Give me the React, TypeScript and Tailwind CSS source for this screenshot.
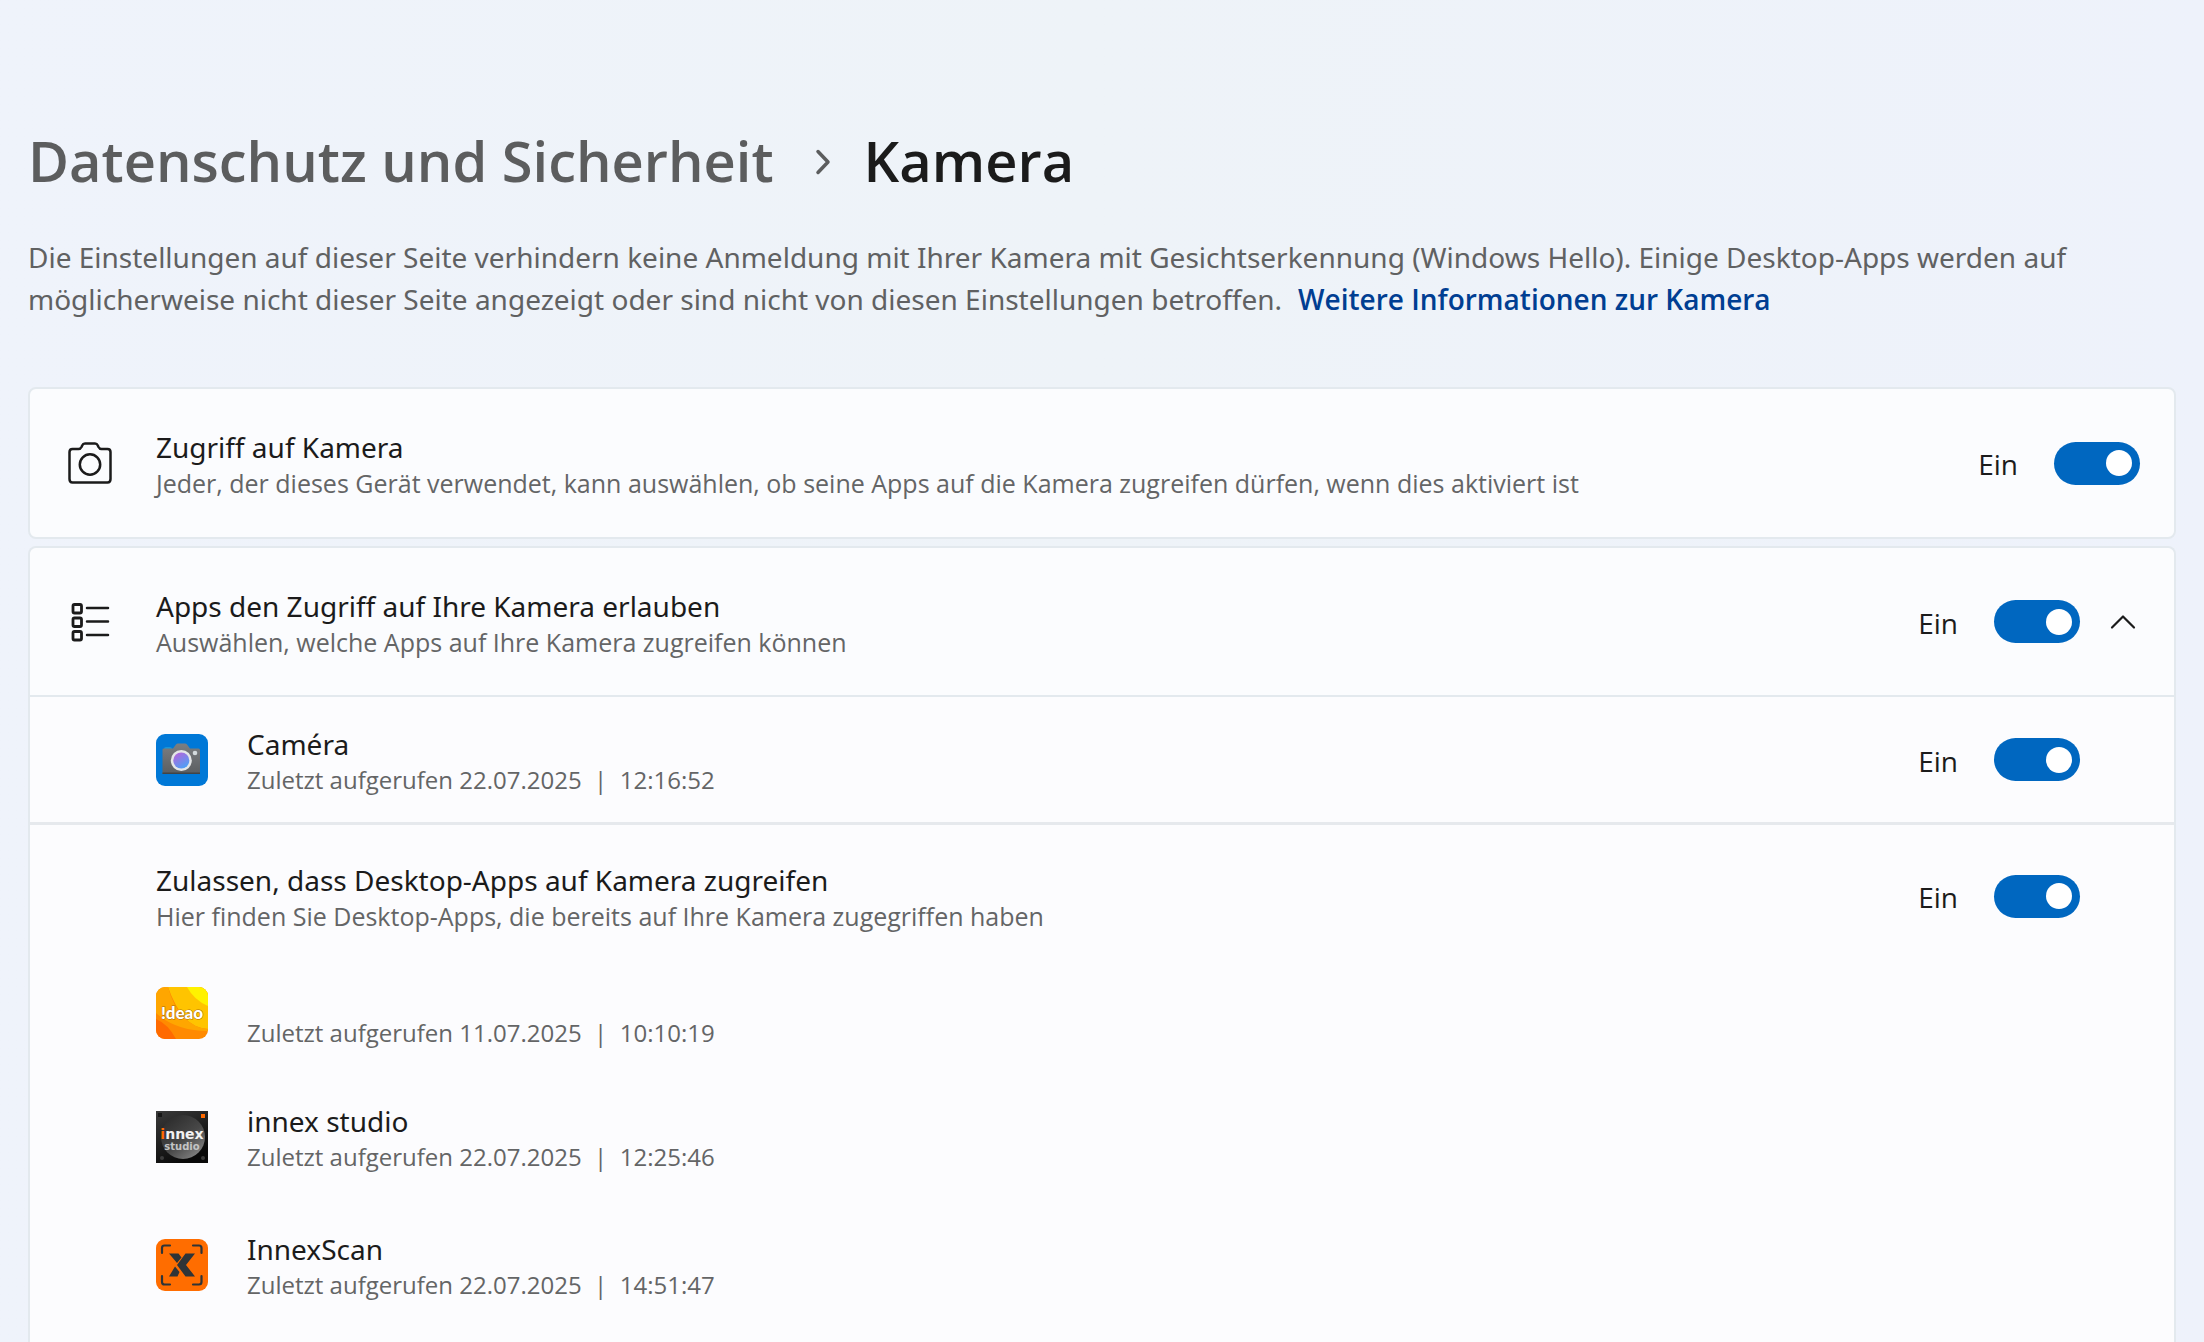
import React, { useState } from 'react';

interface AccessToggleProps {
  id: string;
  label: string;
}

function AccessToggle({ id, label }: AccessToggleProps) {
  const [enabled, setEnabled] = useState(true);

  return (
    <div className="flex flex-shrink-0 items-center gap-9">
      <label htmlFor={id} className="pt-0.5 text-[28px] leading-9 text-[#1b1b1b]">
        {enabled ? 'Ein' : 'Aus'}
      </label>
      <input
        id={id}
        type="checkbox"
        role="switch"
        aria-label={label}
        checked={enabled}
        onChange={(e) => setEnabled(e.target.checked)}
        className="flex h-[43px] w-[86px] cursor-pointer appearance-none items-center rounded-full bg-[#8a8a8a] px-2 before:block before:size-[26px] before:rounded-full before:bg-white checked:justify-end checked:bg-[#0067c0]"
      />
    </div>
  );
}

interface RowTextProps {
  title: string;
  detail: string;
}

function SettingText({ title, detail }: RowTextProps) {
  return (
    <div className="min-w-0 flex-1 pt-1">
      <p className="font-['Noto_Sans',sans-serif] text-[28px] leading-9 text-[#1b1b1b]">{title}</p>
      <p className="text-[25px] leading-9 text-[#646566]">{detail}</p>
    </div>
  );
}

function AppText({ title, detail }: RowTextProps) {
  return (
    <div className="min-w-0 flex-1 pt-1">
      <p className="min-h-9 font-['Noto_Sans',sans-serif] text-[28px] leading-9 text-[#1b1b1b]">{title}</p>
      <p className="whitespace-pre-wrap text-[24px] leading-9 text-[#646566]">{detail}</p>
    </div>
  );
}

function CameraOutline() {
  return (
    <svg viewBox="0 0 44 42" className="h-[42px] w-11" fill="none" stroke="#1b1b1b" strokeWidth="2.5" strokeLinejoin="round">
      <path d="M4.5 7H10.500Q12.500 7 13.500 5L14.200 3.400Q15 1.600 17 1.600H27Q29 1.600 29.800 3.400L30.500 5Q31.500 7 33.500 7H39.500Q42.500 7 42.500 10V37Q42.500 40.500 39.500 40.500H4.500Q1.500 40.500 1.500 37V10Q1.500 7 4.500 7Z" />
      <circle cx="22" cy="22.500" r="10.200" />
    </svg>
  );
}

function AppListOutline() {
  return (
    <svg viewBox="0 0 40 40" className="size-10" fill="none" stroke="#1b1b1b" strokeWidth="2.800" strokeLinecap="round">
      <rect x="3" y="2.500" width="8.500" height="8.500" rx="1.500" />
      <rect x="3" y="16" width="8.500" height="8.500" rx="1.500" />
      <rect x="3" y="29.500" width="8.500" height="8.500" rx="1.500" />
      <path d="M17 6H38M17 19.500H38M17 33H38" strokeWidth="2.500" />
    </svg>
  );
}

function CameraAppIcon() {
  return (
    <svg viewBox="0 0 52 52" className="size-[52px] flex-shrink-0">
      <defs>
        <linearGradient id="lens" x1="0.2" y1="0" x2="0.8" y2="1">
          <stop offset="0" stopColor="#b565dc" />
          <stop offset="1" stopColor="#46a4f8" />
        </linearGradient>
        <linearGradient id="body" x1="0" y1="0" x2="0" y2="1">
          <stop offset="0" stopColor="#7b7e81" />
          <stop offset="1" stopColor="#5b5e61" />
        </linearGradient>
      </defs>
      <rect width="52" height="52" rx="9" fill="#0078d7" />
      <rect x="8" y="13" width="8" height="4" rx="2" fill="#1695d8" />
      <path d="M6.500 15.500Q6.500 14.500 8 14.500H17L20 10.500Q20.700 9.500 22 9.500H29Q30.200 9.500 31 10.500L34 14.500H42.500Q44 14.500 44 16V40H6.500Z" fill="url(#body)" />
      <path d="M6.500 38.500H44V40H6.500Z" fill="#414446" />
      <circle cx="25.300" cy="26.500" r="10.500" fill="#e4e6e8" />
      <circle cx="25.300" cy="26.500" r="8" fill="url(#lens)" />
      <circle cx="39" cy="19" r="2.300" fill="#d3dadd" />
    </svg>
  );
}

function IdeaoIcon() {
  return (
    <svg viewBox="0 0 52 52" className="size-[52px] flex-shrink-0">
      <defs>
        <clipPath id="ideaoClip">
          <rect width="52" height="52" rx="9" />
        </clipPath>
      </defs>
      <g clipPath="url(#ideaoClip)">
        <rect width="52" height="52" fill="#ff8a00" />
        <path d="M12 0H52V42Q38 41 29 31Q19 20 12 0Z" fill="#ffc400" />
        <path d="M0 0H12Q17 20 29 31Q38 41 52 42V44Q20 44 0 26Z" fill="#ffa600" />
        <path d="M0 32Q12 37 20 52H0Z" fill="#ff6a00" />
        <path d="M31 0H52V19Q38 13 31 0Z" fill="#fff200" />
      </g>
      <text x="26" y="32" textAnchor="middle" fontFamily="Lato, sans-serif" fontWeight="900" fontSize="17" fill="#ffffff" stroke="#a86a10" strokeWidth="1" paintOrder="stroke">!deao</text>
    </svg>
  );
}

function InnexStudioIcon() {
  return (
    <svg viewBox="0 0 52 52" className="size-[52px] flex-shrink-0">
      <defs>
        <linearGradient id="dial" x1="0" y1="0" x2="0.8" y2="1">
          <stop offset="0" stopColor="#262626" />
          <stop offset="0.6" stopColor="#484848" />
          <stop offset="1" stopColor="#858585" />
        </linearGradient>
        <linearGradient id="plate" x1="0" y1="0" x2="0.5" y2="1">
          <stop offset="0" stopColor="#3a3a3a" />
          <stop offset="1" stopColor="#090909" />
        </linearGradient>
      </defs>
      <rect width="52" height="52" fill="url(#plate)" />
      <circle cx="27" cy="26" r="22" fill="url(#dial)" />
      <rect x="2" y="2" width="4" height="4" fill="#161616" />
      <rect x="45" y="3" width="4" height="4" fill="#ff6a00" />
      <circle cx="6" cy="47" r="2" fill="#3b3b3b" />
      <circle cx="47" cy="47" r="2" fill="#3b3b3b" />
      <text x="26" y="28" textAnchor="middle" fontFamily="'DejaVu Sans', sans-serif" fontWeight="700" fontSize="14" fill="#f2f2f2">
        <tspan fill="#ff6a00">i</tspan>nnex
      </text>
      <text x="26" y="39" textAnchor="middle" fontFamily="'DejaVu Sans', sans-serif" fontWeight="700" fontSize="10" fill="#c4c4c4">studio</text>
    </svg>
  );
}

function InnexScanIcon() {
  return (
    <svg viewBox="0 0 52 52" className="size-[52px] flex-shrink-0">
      <rect width="52" height="52" rx="9" fill="#ff6d00" />
      <path
        d="M6 14V9Q6 6.500 8.500 6.500H14M37 6.500H43Q45.500 6.500 45.500 9V14M45.500 37V43Q45.500 45.500 43 45.500H37M14 45.500H8.500Q6 45.500 6 43V37"
        fill="none"
        stroke="#2f3437"
        strokeWidth="2.200"
        strokeLinecap="round"
      />
      <path d="M13 14.500H22.500L25.500 18.500L21 24ZM29.500 14.500H39L30 26L39 37.500H29.500L21 26ZM19 27.500L23.500 33L21.500 37.500H13Z" fill="#2f3437" />
    </svg>
  );
}

const desktopApps = [
  { title: '', detail: 'Zuletzt aufgerufen 11.07.2025  |  10:10:19', icon: <IdeaoIcon />, height: 'h-[120px]' },
  { title: 'innex studio', detail: 'Zuletzt aufgerufen 22.07.2025  |  12:25:46', icon: <InnexStudioIcon />, height: 'h-32' },
  { title: 'InnexScan', detail: 'Zuletzt aufgerufen 22.07.2025  |  14:51:47', icon: <InnexScanIcon />, height: 'h-32' },
];

export default function App() {
  const [expanded, setExpanded] = useState(true);

  return (
    <main
      lang="de"
      className="flex min-h-screen flex-col bg-linear-to-r from-[#eff3fb] via-[#eef3f8] to-[#eef2fb] px-7 pt-[118px] font-['Open_Sans','Noto_Sans',sans-serif]"
    >
      <nav aria-label="Navigationspfad">
        <h1 className="flex items-center text-[56px] leading-[84px] font-semibold">
          <a href="#datenschutz" className="text-[#5c5d5e]">Datenschutz und Sicherheit</a>
          <svg viewBox="0 0 18 26" className="mr-8 ml-10 mt-1 h-[26px] w-[18px]" fill="none" stroke="#5c5d5e" strokeWidth="3.500" strokeLinecap="round" strokeLinejoin="round">
            <path d="M4 2.500L14 13L4 23.500" />
          </svg>
          <span className="text-[#1b1b1b]">Kamera</span>
        </h1>
      </nav>

      <p className="mt-[34px] max-w-[2100px] font-['Noto_Sans',sans-serif] text-[28px] leading-[42px] text-[#606162]">
        Die Einstellungen auf dieser Seite verhindern keine Anmeldung mit Ihrer Kamera mit Gesichtserkennung (Windows Hello). Einige Desktop-Apps werden auf möglicherweise nicht dieser Seite angezeigt oder sind nicht von diesen Einstellungen betroffen.
        <a href="#kamera-info" className="ml-4 font-['Open_Sans',sans-serif] font-semibold text-[#003e92]">Weitere Informationen zur Kamera</a>
      </p>

      <section className="mt-[67px] flex h-[152px] items-center rounded-lg border-2 border-[#e3e9ee] bg-[#fbfcfe] pr-[34px]">
        <div className="flex w-[126px] flex-shrink-0 pl-[38px]">
          <CameraOutline />
        </div>
        <SettingText
          title="Zugriff auf Kamera"
          detail="Jeder, der dieses Gerät verwendet, kann auswählen, ob seine Apps auf die Kamera zugreifen dürfen, wenn dies aktiviert ist"
        />
        <AccessToggle id="camera-access" label="Zugriff auf Kamera" />
      </section>

      <section className="mt-[7px] flex flex-1 flex-col rounded-t-lg border-2 border-b-0 border-[#e3e9ee] bg-[#fcfcfe]">
        <div className="flex h-[149px] items-center rounded-t-lg border-b-2 border-[#e3e9ee] bg-[#fbfcfe]">
          <div className="flex w-[126px] flex-shrink-0 pl-10">
            <AppListOutline />
          </div>
          <SettingText title="Apps den Zugriff auf Ihre Kamera erlauben" detail="Auswählen, welche Apps auf Ihre Kamera zugreifen können" />
          <AccessToggle id="apps-access" label="Apps den Zugriff auf Ihre Kamera erlauben" />
          <button
            type="button"
            aria-label="Apps ein- oder ausblenden"
            aria-expanded={expanded}
            onClick={() => setExpanded(!expanded)}
            className="flex h-12 w-[94px] flex-shrink-0 cursor-pointer items-center pl-[30px]"
          >
            <svg viewBox="0 0 26 16" className="h-4 w-[26px]" fill="none" stroke="#1b1b1b" strokeWidth="2.200" strokeLinecap="round" strokeLinejoin="round">
              <path d="M2 13.500L13 2.500L24 13.500" />
            </svg>
          </button>
        </div>

        {expanded && (
          <>
            <div className="flex h-32 items-center border-b-3 border-[#e6e9ed] pr-[94px] pl-[126px]">
              <div className="flex min-w-0 flex-1 items-center gap-[39px]">
                <CameraAppIcon />
                <AppText title="Caméra" detail="Zuletzt aufgerufen 22.07.2025  |  12:16:52" />
              </div>
              <AccessToggle id="app-camera" label="Caméra" />
            </div>

            <div className="flex h-[142px] items-center pr-[94px] pl-[126px]">
              <SettingText
                title="Zulassen, dass Desktop-Apps auf Kamera zugreifen"
                detail="Hier finden Sie Desktop-Apps, die bereits auf Ihre Kamera zugegriffen haben"
              />
              <AccessToggle id="desktop-apps" label="Zulassen, dass Desktop-Apps auf Kamera zugreifen" />
            </div>

            <ul className="-mt-3.5 pl-[126px]">
              {desktopApps.map((app) => (
                <li key={app.detail} className={`flex items-center gap-[39px] ${app.height}`}>
                  {app.icon}
                  <AppText title={app.title} detail={app.detail} />
                </li>
              ))}
            </ul>
          </>
        )}
      </section>
    </main>
  );
}
